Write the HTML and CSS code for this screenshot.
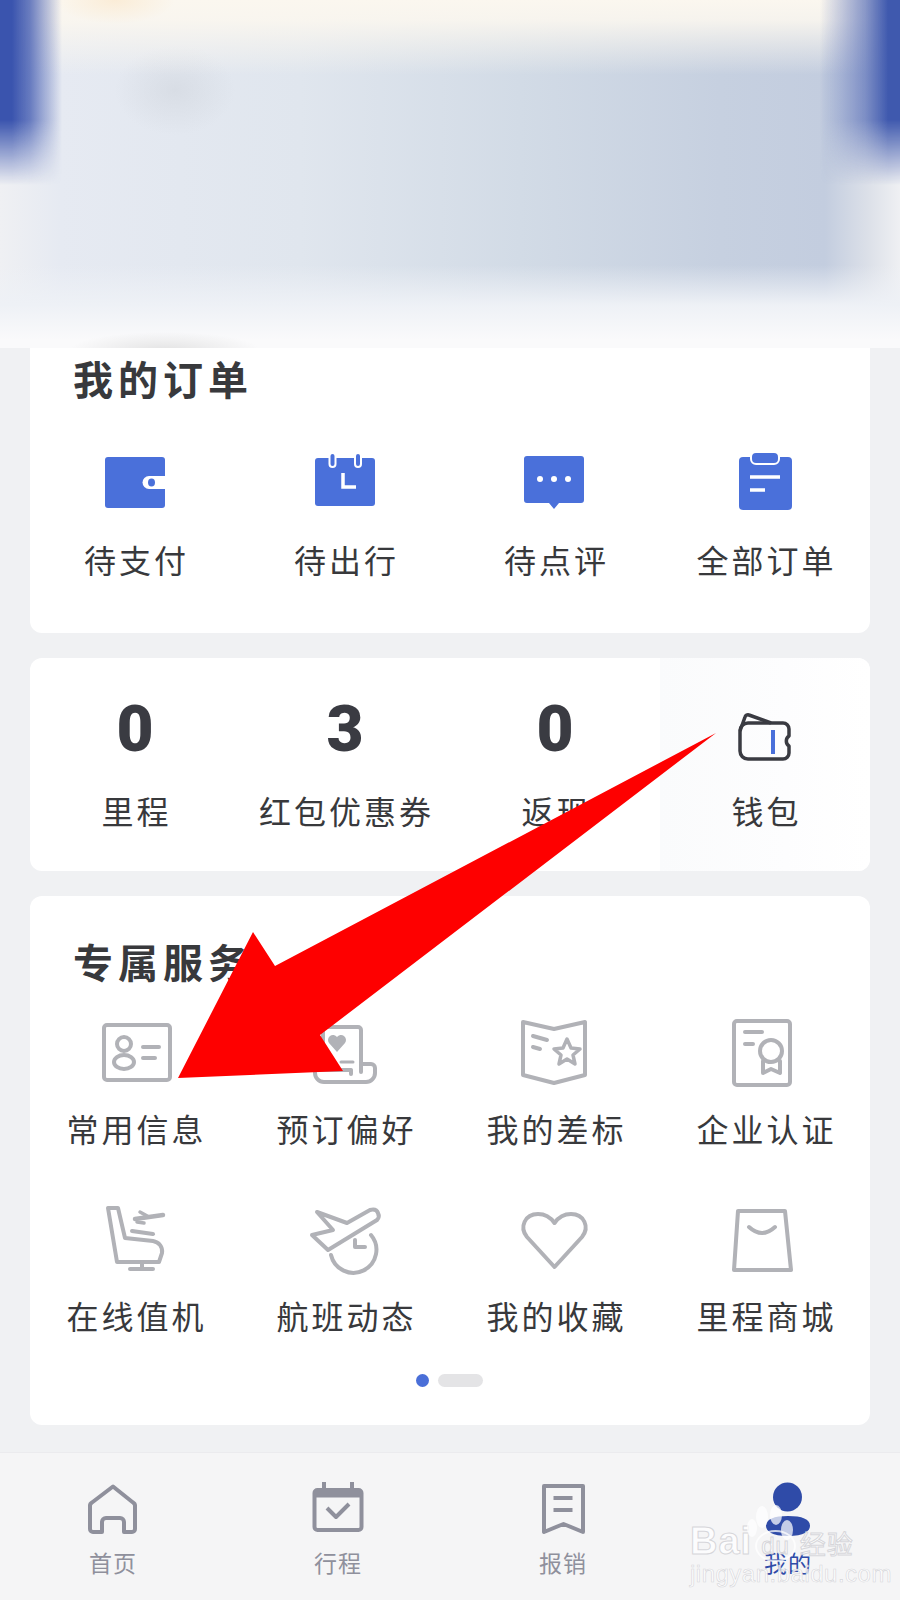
FILE: index.html
```html
<!DOCTYPE html>
<html lang="zh-CN">
<head>
<meta charset="UTF-8">
<meta name="viewport" content="width=device-width, initial-scale=1.0">
<title>我的</title>
<link rel="stylesheet" href="styles.css">
</head>
<body>
<div class="page">
    <header class="profile-blur"></header>

    <main class="content">
        <section class="card orders">
            <h2 class="card-title">我的订单</h2>
            <div class="grid">
                <div class="item">
                    <svg class="ico-order" viewBox="0 0 80 60">
                        <rect x="10" y="5" width="60" height="51" rx="3" fill="#4a70da"/>
                        <path d="M70 24H54a6.500 6.500 0 0 0 0 13H70Z" fill="#fff"/>
                        <ellipse cx="56.500" cy="30.500" rx="3.500" ry="4" fill="#4a70da"/>
                    </svg>
                    <span class="label">待支付</span>
                </div>
                <div class="item">
                    <svg class="ico-order" viewBox="0 0 80 60">
                        <rect x="10" y="6" width="60" height="48" rx="3" fill="#4a70da"/>
                        <rect x="24.500" y="1" width="6" height="14" rx="3" fill="#4a70da" stroke="#fff" stroke-width="2"/>
                        <rect x="50" y="1" width="6" height="14" rx="3" fill="#4a70da" stroke="#fff" stroke-width="2"/>
                        <path d="M38 21V35H51" fill="none" stroke="#fff" stroke-width="3.500"/>
                    </svg>
                    <span class="label">待出行</span>
                </div>
                <div class="item">
                    <svg class="ico-order" viewBox="0 0 80 60">
                        <path d="M12 4H66a3 3 0 0 1 3 3V48a3 3 0 0 1-3 3H44L39 57L34 51H12a3 3 0 0 1-3-3V7a3 3 0 0 1 3-3Z" fill="#4a70da"/>
                        <circle cx="25" cy="27" r="3" fill="#fff"/>
                        <circle cx="39" cy="27" r="3" fill="#fff"/>
                        <circle cx="53" cy="27" r="3" fill="#fff"/>
                    </svg>
                    <span class="label">待点评</span>
                </div>
                <div class="item">
                    <svg class="ico-order" viewBox="0 0 80 60">
                        <rect x="14" y="5" width="53" height="53" rx="4" fill="#4a70da"/>
                        <rect x="26" y="0" width="28" height="12" rx="5" fill="#4a70da" stroke="#fff" stroke-width="2"/>
                        <path d="M25 25H55M25 38H40" fill="none" stroke="#fff" stroke-width="3.500"/>
                    </svg>
                    <span class="label">全部订单</span>
                </div>
            </div>
        </section>

        <section class="card stats">
            <div class="stat">
                <span class="num">0</span>
                <span class="label">里程</span>
            </div>
            <div class="stat">
                <span class="num">3</span>
                <span class="label">红包优惠券</span>
            </div>
            <div class="stat">
                <span class="num">0</span>
                <span class="label">返现</span>
            </div>
            <div class="stat wallet">
                <svg class="ico-wallet" viewBox="0 0 80 70" fill="none" stroke="#3a3b42" stroke-width="3.500" stroke-linejoin="round">
                    <path d="M15 36a8 8 0 0 1 8-8H58a6 6 0 0 1 6 6V41a6 6 0 0 0 0 10V58a6 6 0 0 1-6 6H23a8 8 0 0 1-8-8Z"/>
                    <path d="M15 36L20 22a3 3 0 0 1 4-2L46 28"/>
                    <path d="M48 35V59" stroke="#4a70da" stroke-width="4"/>
                </svg>
                <span class="label">钱包</span>
            </div>
        </section>

        <section class="card services">
            <h2 class="card-title">专属服务</h2>
            <div class="grid service-grid">
                <div class="item">
                    <svg class="ico-service" viewBox="0 0 80 72">
                        <rect x="9" y="9" width="66" height="55" rx="3"/>
                        <circle cx="29" cy="28" r="7"/>
                        <ellipse cx="29" cy="46" rx="10" ry="7"/>
                        <path d="M48 31H64M48 42H60"/>
                    </svg>
                    <span class="label">常用信息</span>
                </div>
                <div class="item">
                    <svg class="ico-service" viewBox="0 0 80 72">
                        <path d="M18 50V14a3 3 0 0 1 3-3H53a3 3 0 0 1 3 3V56"/>
                        <path d="M56 48H66a4 4 0 0 1 4 4V57a9 9 0 0 1-9 9H19a9 9 0 0 1-9-9V54H46V58"/>
                        <path d="M32 36L24 27a5 5 0 0 1 8-6a5 5 0 0 1 8 6Z" fill="#b1b2b7" stroke="none"/>
                        <path d="M36 46H48M36 54H46" stroke-width="3"/>
                    </svg>
                    <span class="label">预订偏好</span>
                </div>
                <div class="item">
                    <svg class="ico-service" viewBox="0 0 80 72">
                        <path d="M8 6L39 13L70 6V59L39 67L8 59Z"/>
                        <path d="M18 20L32 24M18 31L25 33"/>
                        <path d="M52 23L56 32L65 33L58 39L60 48L52 43L44 48L46 39L39 33L48 32Z" stroke-width="3.500"/>
                    </svg>
                    <span class="label">我的差标</span>
                </div>
                <div class="item">
                    <svg class="ico-service" viewBox="0 0 80 72">
                        <rect x="9" y="5" width="56" height="64" rx="3"/>
                        <path d="M20 16H37M20 28H28"/>
                        <circle cx="46" cy="35" r="11"/>
                        <path d="M38 45V57L46 53L55 57V45"/>
                    </svg>
                    <span class="label">企业认证</span>
                </div>
                <div class="item">
                    <svg class="ico-service" viewBox="0 0 80 72">
                        <path d="M13 5H23L30 35L58 38C64 39 68 44 67 50L64 59H22Z"/>
                        <path d="M47 59V66M35 66H58"/>
                        <path d="M37 28L58 31"/>
                        <path d="M40 16L68 12" stroke-width="4.500"/>
                        <path d="M45 9L54 14M42 19L49 20" stroke-width="3.500"/>
                    </svg>
                    <span class="label">在线值机</span>
                </div>
                <div class="item">
                    <svg class="ico-service" viewBox="0 0 80 72">
                        <path d="M73 10C72 7 69 6 65 7L42 20L12 9L28 27L7 32L23 47L72 17C74 15 74 12 73 10Z"/>
                        <path d="M66 32A23 23 0 1 1 26 52"/>
                        <path d="M50 37V44H60"/>
                    </svg>
                    <span class="label">航班动态</span>
                </div>
                <div class="item">
                    <svg class="ico-service" viewBox="0 0 80 72">
                        <path d="M39.500 64L12 34C4 24 10 11 23 11C31 11 36 15 39.500 20C43 15 48 11 56 11C69 11 75 24 67 34Z"/>
                    </svg>
                    <span class="label">我的收藏</span>
                </div>
                <div class="item">
                    <svg class="ico-service" viewBox="0 0 80 72">
                        <path d="M13 8H60L66 67H9Z"/>
                        <path d="M24 24Q37 36 50 24"/>
                    </svg>
                    <span class="label">里程商城</span>
                </div>
            </div>
            <div class="dots">
                <span class="dot"></span>
                <span class="pill"></span>
            </div>
        </section>
    </main>

    <nav class="tabbar">
        <div class="tab">
            <svg class="ico-tab" viewBox="0 0 60 56">
                <path d="M30 6.500L50 22.500a4 4 0 0 1 2 4V49a3 3 0 0 1-3 3H41V42a4 4 0 0 0-4-4H23a4 4 0 0 0-4 4V52H10a3 3 0 0 1-3-3V26.500a4 4 0 0 1 2-4Z"/>
            </svg>
            <span class="tab-label">首页</span>
        </div>
        <div class="tab">
            <svg class="ico-tab" viewBox="0 0 60 56">
                <rect x="6.500" y="10" width="47" height="40" rx="3"/>
                <path d="M6.500 14H53.500" stroke-width="7"/>
                <path d="M16 2V10M44 2V10M19 28L28 37L41 24"/>
            </svg>
            <span class="tab-label">行程</span>
        </div>
        <div class="tab">
            <svg class="ico-tab" viewBox="0 0 60 56">
                <path d="M11 6H50V52L30.500 44L11 52Z"/>
                <path d="M20.500 18H39.500M20.500 30H39.500"/>
            </svg>
            <span class="tab-label">报销</span>
        </div>
        <div class="tab active">
            <svg class="ico-tab" viewBox="0 0 60 56">
                <circle cx="29.500" cy="17" r="14.500" fill="#2f4ba8" stroke="none"/>
                <path d="M8 46C8 39 16 36 30 36C44 36 52 39 52 46C52 51 46 56 30 56C14 56 8 51 8 46Z" fill="#2f4ba8" stroke="none"/>
            </svg>
            <span class="tab-label">我的</span>
        </div>
    </nav>

    <svg class="arrow" viewBox="0 0 900 1600">
        <polygon points="716,733 275,966 253,932 178,1078 343,1071 320,1035" fill="#fe0000"/>
    </svg>

    <div class="watermark">
        <svg class="paw" viewBox="0 0 60 50">
            <ellipse cx="16" cy="14" rx="6" ry="11"/>
            <ellipse cx="6" cy="25" rx="5" ry="9"/>
            <ellipse cx="30" cy="12" rx="6" ry="10"/>
            <ellipse cx="41" cy="27" rx="6" ry="10"/>
        </svg>
        <div class="wm-top"><span>Bai</span><span class="wm-du">du</span><span class="wm-cn">经验</span></div>
        <div class="wm-url">jingyan.baidu.com</div>
    </div>
</div>
</body>
</html>
```

FILE: styles.css
```css
* {
    box-sizing: border-box;
}

body {
    margin: 0;
    background-color: #f0f1f3;
    color: #38393c;
    font-family: "Noto Sans CJK SC", "Noto Sans", sans-serif;
}

.page {
    position: relative;
    width: 900px;
    height: 1600px;
    overflow: hidden;
}

/* blurred account banner, only gradients */
.profile-blur {
    position: relative;
    height: 348px;
    background:
        radial-gradient(ellipse 95px 18px at 165px 350px, rgba(205, 205, 205, .5), rgba(205, 205, 205, 0)),
        radial-gradient(ellipse 60px 24px at 115px 0, rgba(250, 232, 205, .7), rgba(250, 232, 205, 0)),
        linear-gradient(#fbf7ef 0, rgba(251, 247, 239, .9) 20px, rgba(251, 247, 239, 0) 75px),
        linear-gradient(rgba(248, 249, 251, 0) 265px, #eef1f6 305px, #fafafb 340px),
        radial-gradient(ellipse 60px 45px at 175px 90px, rgba(205, 210, 218, .5), rgba(205, 210, 218, 0)),
        linear-gradient(to right, #eff0f3 0, #e6eaf2 60px, #e0e6ee 300px, #d2dbe6 520px, #c6d0e0 720px, #c3cddf 825px, #dde1e9 870px, #eff0f3 900px);
}

/* the blue side strips fade out downwards */
.profile-blur::before,
.profile-blur::after {
    content: "";
    position: absolute;
    top: 0;
    height: 200px;
    -webkit-mask-image: linear-gradient(#000 120px, transparent 185px);
    mask-image: linear-gradient(#000 120px, transparent 185px);
}

.profile-blur::before {
    left: 0;
    width: 70px;
    background: linear-gradient(to right, #3a54ae 12px, rgba(58, 84, 174, .75) 30px, rgba(58, 84, 174, 0) 62px);
}

.profile-blur::after {
    right: 0;
    width: 90px;
    background: linear-gradient(to left, #3f59ae 12px, rgba(63, 89, 174, .6) 35px, rgba(63, 89, 174, 0) 80px);
}

.content {
    display: flex;
    flex-direction: column;
    gap: 25px;
    padding: 0 30px;
}

.card {
    background-color: #fff;
    border-radius: 12px;
}

.orders {
    height: 285px;
    padding-top: 6px;
    border-radius: 0 0 12px 12px;
}

.services {
    height: 529px;
    padding-top: 41px;
}

.card-title {
    margin: 0;
    padding-left: 43px;
    font-size: 40px;
    line-height: 48px;
    font-weight: 700;
    letter-spacing: 5px;
}

.grid {
    display: grid;
    grid-template-columns: repeat(4, 210px);
    margin-top: 50px;
}

.service-grid {
    margin-top: 31px;
    row-gap: 55px;
}

.item {
    display: flex;
    flex-direction: column;
    align-items: center;
}

.label {
    margin-right: -3px;
    font-size: 32px;
    line-height: 40px;
    letter-spacing: 3px;
    white-space: nowrap;
}

.ico-order {
    width: 80px;
    height: 60px;
    margin-bottom: 27px;
}

.ico-service {
    width: 80px;
    height: 72px;
    margin-bottom: 20px;
    fill: none;
    stroke: #b1b2b7;
    stroke-width: 4;
    stroke-linejoin: round;
    stroke-linecap: round;
}

.stats {
    display: grid;
    grid-template-columns: repeat(4, 210px);
    height: 213px;
    overflow: hidden;
}

.stat {
    display: flex;
    flex-direction: column;
    align-items: center;
    padding-top: 37px;
}

.num {
    height: 70px;
    margin-bottom: 25px;
    font-family: Roboto, sans-serif;
    font-size: 64px;
    line-height: 70px;
    font-weight: 900;
    color: #3a3b42;
}

.wallet {
    background: linear-gradient(to right, #fafbfc, #fdfdfe 60%, #fff);
}

.ico-wallet {
    width: 80px;
    height: 70px;
    margin-bottom: 25px;
}

.dots {
    display: flex;
    justify-content: center;
    gap: 9px;
    margin-top: 39px;
    padding-right: 2px;
}

.dot {
    width: 13px;
    height: 13px;
    border-radius: 50%;
    background-color: #4a6fd8;
}

.pill {
    width: 45px;
    height: 13px;
    border-radius: 7px;
    background-color: #e4e4e6;
}

.tabbar {
    display: grid;
    grid-template-columns: repeat(4, 225px);
    height: 148px;
    margin-top: 27px;
    padding-top: 27px;
    border-top: 1px solid #ebebee;
    background-color: #f5f5f6;
}

.tab {
    display: flex;
    flex-direction: column;
    align-items: center;
}

.ico-tab {
    width: 60px;
    height: 56px;
    margin-bottom: 10px;
    fill: none;
    stroke: #8f909c;
    stroke-width: 4;
    stroke-linejoin: round;
}

.tab-label {
    margin-right: -1px;
    font-size: 23px;
    line-height: 32px;
    letter-spacing: 1px;
    color: #8f909c;
}

.active .tab-label {
    color: #2f4ba8;
}

/* red arrow drawn on top of the screenshot */
.arrow {
    position: absolute;
    left: 0;
    top: 0;
    width: 900px;
    height: 1600px;
}

.watermark {
    position: absolute;
    left: 690px;
    top: 1503px;
    width: 170px;
    color: rgba(255, 255, 255, .8);
    font-family: "Liberation Sans", sans-serif;
    -webkit-text-stroke: 1px rgba(205, 205, 210, .8);
}

.paw {
    position: absolute;
    left: 56px;
    top: 0;
    width: 60px;
    height: 50px;
    fill: rgba(255, 255, 255, .72);
}

.wm-top {
    display: flex;
    align-items: baseline;
    padding-top: 20px;
    font-size: 38px;
    line-height: 36px;
    font-weight: 700;
    letter-spacing: 1px;
}

.wm-du {
    margin-left: 3px;
    padding: 0 4px;
    border: 2px solid rgba(255, 255, 255, .75);
    border-radius: 50%;
    font-size: 24px;
    line-height: 28px;
    font-weight: 400;
}

.wm-cn {
    margin-left: 4px;
    font-family: "Noto Sans CJK SC", sans-serif;
    font-size: 26px;
    font-weight: 400;
    letter-spacing: 1px;
}

.wm-url {
    font-size: 24px;
    line-height: 24px;
    letter-spacing: .5px;
    -webkit-text-stroke-width: .6px;
    white-space: nowrap;
}
```
